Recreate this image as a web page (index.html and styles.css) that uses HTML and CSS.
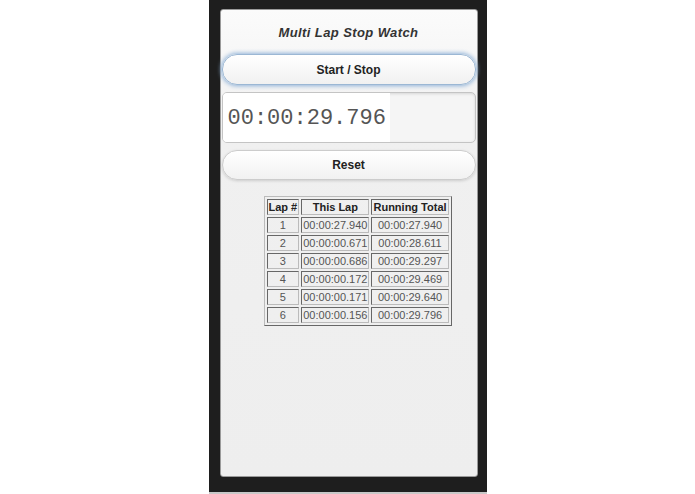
FILE: index.html
```html
<!DOCTYPE html>
<html lang="en">
<head>
    <meta charset="UTF-8">
    <meta name="viewport" content="width=device-width, initial-scale=1.0">
    <title>Multi Lap Stop Watch</title>
    <link rel="stylesheet" href="styles.css">
</head>
<body>

<div class="device">
    <div class="page">
        <div class="header">
            <h1>Multi Lap Stop Watch</h1>
        </div>

        <button class="btn btn-focus" id="start-stop">Start / Stop</button>

        <div class="display">
            <span id="time">00:00:29.796</span>
        </div>

        <button class="btn" id="reset">Reset</button>

        <table class="laps" id="laps">
            <tr>
                <th>Lap #</th>
                <th>This Lap</th>
                <th>Running Total</th>
            </tr>
            <tr><td class="num">1</td><td class="lap">00:00:27.940</td><td class="total">00:00:27.940</td></tr>
            <tr><td class="num">2</td><td class="lap">00:00:00.671</td><td class="total">00:00:28.611</td></tr>
            <tr><td class="num">3</td><td class="lap">00:00:00.686</td><td class="total">00:00:29.297</td></tr>
            <tr><td class="num">4</td><td class="lap">00:00:00.172</td><td class="total">00:00:29.469</td></tr>
            <tr><td class="num">5</td><td class="lap">00:00:00.171</td><td class="total">00:00:29.640</td></tr>
            <tr><td class="num">6</td><td class="lap">00:00:00.156</td><td class="total">00:00:29.796</td></tr>
        </table>
    </div>
</div>

</body>
</html>
```

FILE: styles.css
```css
body {
    margin: 0;
    background-color: #ffffff;
    font-family: 'Liberation Sans', Arial, sans-serif;
    display: flex;
    justify-content: center;
}

/* Phone frame */
.device {
    width: 278px;
    height: 494px;
    box-sizing: border-box;
    padding: 9px 9px 15px 11px;
    background-color: #1e1e1e;
    border-bottom: 2px solid #c8c8c8;
}

.page {
    height: 100%;
    box-sizing: border-box;
    padding: 0 1px;
    border: 1px solid #9a9a9a;
    border-radius: 3px;
    background: linear-gradient(#fbfbfb, #f0f0f0 120px, #eeeeee);
    display: flex;
    flex-direction: column;
}

/* Title bar */
.header {
    height: 44px;
    display: flex;
    align-items: center;
    justify-content: center;
}

.header h1 {
    margin: 0;
    font-size: 13px;
    font-weight: bold;
    font-style: italic;
    letter-spacing: 0.4px;
    color: #333333;
}

/* Buttons */
.btn {
    height: 31px;
    margin: 0;
    border: 1px solid #cccccc;
    border-radius: 15px;
    background: linear-gradient(#ffffff, #f1f1f1);
    box-shadow: 0 1px 3px rgba(0, 0, 0, 0.15);
    font-family: 'Liberation Sans', Arial, sans-serif;
    font-size: 12px;
    font-weight: bold;
    color: #222222;
    cursor: pointer;
}

.btn-focus {
    border-color: #9bb7d4;
    box-shadow: 0 0 4px 1px #8fb2d8;
}

#reset {
    height: 30px;
    margin-top: 7px;
}

/* Time readout */
.display {
    height: 51px;
    box-sizing: border-box;
    margin-top: 7px;
    border: 1px solid #c4c4c4;
    border-radius: 5px;
    background-color: #f5f5f5;
    box-shadow: inset 0 1px 3px rgba(0, 0, 0, 0.12);
    display: flex;
    overflow: hidden;
}

#time {
    display: flex;
    align-items: center;
    padding: 2px 4px 0 5px;
    background-color: #ffffff;
    font-family: 'Liberation Mono', 'Courier New', monospace;
    font-size: 22px;
    color: #555555;
}

/* Lap table */
.laps {
    margin: 16px 0 0 42px;
    align-self: flex-start;
    border: 1px outset #bbbbbb;
    border-spacing: 2px;
    font-size: 11px;
    line-height: 13px;
    color: #555555;
}

.laps th,
.laps td {
    height: 14px;
    padding: 0 1px;
    border: 1px inset #bbbbbb;
    white-space: nowrap;
}

.laps th {
    color: #222222;
    text-align: center;
}

.laps td.num,
.laps td.total {
    text-align: center;
}

.laps td.lap {
    text-align: left;
}
```
